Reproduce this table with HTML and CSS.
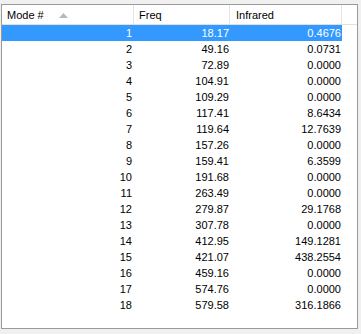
FILE: index.html
```html
<!DOCTYPE html>
<html>
<head>
	<title>Modes</title>
	<link rel="stylesheet" href="styles.css">
</head>
<body>
	<div class="grid">
		<div class="head">
			<div class="hcell">Mode #
				<svg class="sort" width="9" height="5" viewBox="0 0 9 5"><polygon points="0,5 4.5,0 9,5" fill="#b4b9c0"/></svg>
			</div>
			<div class="hcell">Freq</div>
			<div class="hcell">Infrared</div>
			<div class="hfill"></div>
		</div>
		<div class="row sel"><span>1</span><span>18.17</span><span>0.4676</span></div>
		<div class="row"><span>2</span><span>49.16</span><span>0.0731</span></div>
		<div class="row"><span>3</span><span>72.89</span><span>0.0000</span></div>
		<div class="row"><span>4</span><span>104.91</span><span>0.0000</span></div>
		<div class="row"><span>5</span><span>109.29</span><span>0.0000</span></div>
		<div class="row"><span>6</span><span>117.41</span><span>8.6434</span></div>
		<div class="row"><span>7</span><span>119.64</span><span>12.7639</span></div>
		<div class="row"><span>8</span><span>157.26</span><span>0.0000</span></div>
		<div class="row"><span>9</span><span>159.41</span><span>6.3599</span></div>
		<div class="row"><span>10</span><span>191.68</span><span>0.0000</span></div>
		<div class="row"><span>11</span><span>263.49</span><span>0.0000</span></div>
		<div class="row"><span>12</span><span>279.87</span><span>29.1768</span></div>
		<div class="row"><span>13</span><span>307.78</span><span>0.0000</span></div>
		<div class="row"><span>14</span><span>412.95</span><span>149.1281</span></div>
		<div class="row"><span>15</span><span>421.07</span><span>438.2554</span></div>
		<div class="row"><span>16</span><span>459.16</span><span>0.0000</span></div>
		<div class="row"><span>17</span><span>574.76</span><span>0.0000</span></div>
		<div class="row"><span>18</span><span>579.58</span><span>316.1866</span></div>
	</div>
</body>
</html>
```

FILE: styles.css
```css
body {
	margin: 0;
	padding: 4px 0 0 1px;
	background-color: #f0f0f0;
	font-family: "Liberation Sans", Arial, sans-serif;
	font-size: 11px;
	color: #000;
}
.grid {
	width: 355px;
	height: 323px;
	border: solid #9a9a9a 1px;
	background-color: #fff;
}
.head {
	display: flex;
	height: 19px;
	border-bottom: solid #e0e0e0 1px;
	background-color: #fff;
}
.hcell {
	display: flex;
	align-items: center;
	box-sizing: border-box;
	padding-left: 5px;
	border-right: solid #e5e5e5 1px;
}
.hcell:nth-child(1) { width: 132px; }
.hcell:nth-child(2) { width: 96px; }
.hcell:nth-child(3) { width: 112px; padding-left: 6px; }
.hfill {
	flex: 1;
}
.sort {
	margin-left: 15px;
	margin-top: 1px;
}
.row {
	display: grid;
	grid-template-columns: 132px 96px 112px;
	height: 16px;
	line-height: 16px;
}
.row span {
	text-align: right;
	padding-right: 2px;
}
.row span:nth-child(2),
.row span:nth-child(3) {
	padding-right: 1px;
}
.sel {
	width: 340px;
	background-color: #3399ff;
	color: #fff;
}
```
